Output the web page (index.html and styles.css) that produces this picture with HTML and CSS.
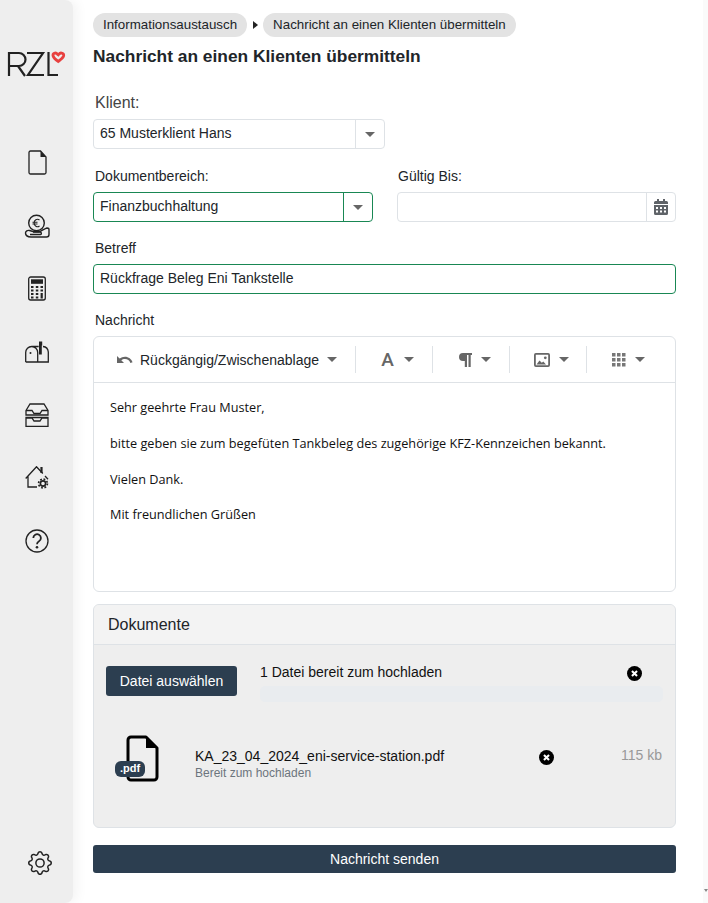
FILE: index.html
```html
<!DOCTYPE html>
<html lang="de">
<head>
    <meta charset="UTF-8">
    <title>Nachricht an einen Klienten übermitteln</title>
    <link rel="stylesheet" href="styles.css">
</head>
<body>
    <nav class="sidebar">
        <svg class="logo" width="60" height="30" viewBox="0 0 60 30" fill="none" stroke="#222" stroke-width="2.200">
            <path d="M2 27V4h10a6.500 6.500 0 0 1 0 13H2M11 17l7 10"/>
            <path d="M20 4h16L21 26h16"/>
            <path d="M41.500 3v23H51"/>
            <path d="M50.500 5.300c-1.800-2.500-5.300-1-4.300 2 .7 2 3 3.700 5 5.200 2-1.500 4.500-3.200 5.300-5.200 1-3-2.800-4.500-4.800-2l-1.200 1.700" stroke="#e8403f" stroke-width="2.800"/>
        </svg>
        <div class="nav-icons">
            <div class="nav-item">
                <svg width="20" height="25" viewBox="0 0 20 25" fill="none" stroke="#222" stroke-width="1.300"><path d="M3.500 1h10l5.500 6v15.500a1.500 1.500 0 0 1-1.500 1.500h-14A1.500 1.500 0 0 1 2 22.500v-20A1.500 1.500 0 0 1 3.500 1z"/><path d="M13.500 1l5.500 6h-5.500z" fill="#222" stroke="none"/></svg>
            </div>
            <div class="nav-item">
                <svg width="26" height="24" viewBox="0 0 26 24" fill="none" stroke="#222" stroke-width="1.400"><circle cx="12.500" cy="9" r="7.800"/><path d="M15.500 6a3.300 3.300 0 0 0-5.300 3 3.300 3.300 0 0 0 5.300 3M8.500 8.300h5M8.500 10h5" stroke-width="1.100"/><path d="M1.500 19c0-2 2-3 4-2.500l3.500 1c2.500.3 5 .3 7 0 2-.8 5-3 7-3.500 1.200 0 2 .5 2 1.500v5c0 1.500-1 2.500-2.500 2.500H7c-3 0-5.500-1.500-5.500-4z" fill="#eee"/><path d="M9 18h7c1.500 0 2 2 .5 2.500H6"/></svg>
            </div>
            <div class="nav-item">
                <svg width="20" height="25" viewBox="0 0 20 25" fill="none" stroke="#222" stroke-width="1.300"><rect x="1.700" y="1" width="16.600" height="23" rx="2"/><rect x="4" y="3.300" width="12" height="4.500" fill="#222" stroke="none"/><path d="M4 11h2.500M8.800 11h2.500M13.500 11h2.500M4 14.500h2.500M8.800 14.500h2.500M13.500 14.500h2.500M4 18h2.500M8.800 18h2.500M4 21.500h2.500M8.800 21.500h2.500M14.700 17v5.500" stroke-width="2.200"/></svg>
            </div>
            <div class="nav-item">
                <svg width="24" height="22" viewBox="0 0 24 22" fill="none" stroke="#222" stroke-width="1.300"><path d="M.7 21V11.500a6 6 0 0 1 6-6 6 6 0 0 1 6 6V21M.7 21h22.600V11a6 6 0 0 0-5.300-5.500M6.700 5.500h7"/><circle cx="5.500" cy="12" r="1" fill="#222" stroke="none"/><path d="M14 .5h3.200v4H16.800V13.500H14z" fill="#222" stroke="none"/></svg>
            </div>
            <div class="nav-item">
                <svg width="24" height="24" viewBox="0 0 24 24" fill="none" stroke="#222" stroke-width="1.300"><path d="M1 7.500L5 1h14l4 6.500v4.500H1z"/><path d="M1 7.500h6l2 3h6l2-3h6"/><path d="M1 14.500v9h22v-9zM1 15h6l2 3h6l2-3h6"/></svg>
            </div>
            <div class="nav-item">
                <svg width="24" height="23" viewBox="0 0 24 23" fill="none" stroke="#222" stroke-width="1.300"><path d="M.7 12.500L11.500.7l6.300 6.800M20 10l3 3.200M3 10.500V21h9"/><path d="M16.500 1v6" stroke-width="2.200"/><circle cx="18" cy="17.500" r="2.600" stroke-width="1.600"/><circle cx="18" cy="17.500" r="4.400" stroke-width="1.700" stroke-dasharray="1.800 1.655"/></svg>
            </div>
            <div class="nav-item">
                <svg width="24" height="24" viewBox="0 0 24 24" fill="none" stroke="#222" stroke-width="1.300"><circle cx="12" cy="12" r="11"/><path d="M8.300 9a3.800 3.800 0 1 1 5.700 3.300c-1.300.8-2 1.500-2 3" stroke-width="1.800"/><circle cx="12" cy="18.300" r="1.300" fill="#222" stroke="none"/></svg>
            </div>
        </div>
        <svg class="gear" width="24" height="24" viewBox="0 0 16 16" fill="#222"><path d="M8 4.754a3.246 3.246 0 1 0 0 6.492 3.246 3.246 0 0 0 0-6.492zM5.754 8a2.246 2.246 0 1 1 4.492 0 2.246 2.246 0 0 1-4.492 0z"/><path d="M9.796 1.343c-.527-1.790-3.065-1.790-3.592 0l-.094.319a.873.873 0 0 1-1.255.52l-.292-.16c-1.640-.892-3.433.902-2.540 2.541l.159.292a.873.873 0 0 1-.52 1.255l-.319.094c-1.790.527-1.790 3.065 0 3.592l.319.094a.873.873 0 0 1 .52 1.255l-.16.292c-.892 1.640.901 3.434 2.541 2.540l.292-.159a.873.873 0 0 1 1.255.52l.094.319c.527 1.790 3.065 1.790 3.592 0l.094-.319a.873.873 0 0 1 1.255-.52l.292.16c1.640.893 3.434-.902 2.540-2.541l-.159-.292a.873.873 0 0 1 .52-1.255l.319-.094c1.790-.527 1.790-3.065 0-3.592l-.319-.094a.873.873 0 0 1-.52-1.255l.16-.292c.893-1.640-.902-3.433-2.541-2.540l-.292.159a.873.873 0 0 1-1.255-.52l-.094-.319zm-2.633.283c.246-.835 1.428-.835 1.674 0l.094.319a1.873 1.873 0 0 0 2.693 1.115l.291-.16c.764-.415 1.600.42 1.184 1.185l-.159.292a1.873 1.873 0 0 0 1.116 2.692l.318.094c.835.246.835 1.428 0 1.674l-.319.094a1.873 1.873 0 0 0-1.115 2.693l.16.291c.415.764-.42 1.600-1.185 1.184l-.291-.159a1.873 1.873 0 0 0-2.693 1.116l-.094.318c-.246.835-1.428.835-1.674 0l-.094-.319a1.873 1.873 0 0 0-2.692-1.115l-.292.16c-.764.415-1.600-.42-1.184-1.185l.159-.291A1.873 1.873 0 0 0 1.945 8.930l-.319-.094c-.835-.246-.835-1.428 0-1.674l.319-.094A1.873 1.873 0 0 0 3.060 4.377l-.16-.292c-.415-.764.42-1.600 1.185-1.184l.292.159a1.873 1.873 0 0 0 2.692-1.115l.094-.319z"/></svg>
    </nav>

    <main class="content">
        <div class="breadcrumb">
            <span class="crumb">Informationsaustausch</span>
            <span class="crumb-arrow"></span>
            <span class="crumb">Nachricht an einen Klienten übermitteln</span>
        </div>
        <h1 class="title">Nachricht an einen Klienten übermitteln</h1>

        <label class="label label-big">Klient:</label>
        <div class="field field-client">
            <span class="field-value">65 Musterklient Hans</span>
            <span class="field-btn"><i class="caret"></i></span>
        </div>

        <div class="row">
            <div class="col-area">
                <label class="label">Dokumentbereich:</label>
                <div class="field valid">
                    <span class="field-value">Finanzbuchhaltung</span>
                    <span class="field-btn"><i class="caret"></i></span>
                </div>
            </div>
            <div class="col-date">
                <label class="label">Gültig Bis:</label>
                <div class="field">
                    <span class="field-value"></span>
                    <span class="field-btn">
                        <svg width="14" height="16" viewBox="0 0 14 16" fill="#5f6368"><path d="M3 0h2v2h4V0h2v2h1.500A1.500 1.500 0 0 1 14 3.500V5H0V3.500A1.500 1.500 0 0 1 1.500 2H3zM0 6h14v8.500a1.500 1.500 0 0 1-1.500 1.500h-11A1.500 1.500 0 0 1 0 14.500zm2 2v2h2V8zm4 0v2h2V8zm4 0v2h2V8zm-8 3.500v2h2v-2zm4 0v2h2v-2zm4 0v2h2v-2z"/></svg>
                    </span>
                </div>
            </div>
        </div>

        <label class="label label-gap">Betreff</label>
        <div class="field valid">
            <span class="field-value">Rückfrage Beleg Eni Tankstelle</span>
        </div>

        <label class="label label-gap">Nachricht</label>
        <div class="editor">
            <div class="toolbar">
                <div class="tool tool-first">
                    <svg width="16" height="10" viewBox="0 0 16 10" fill="#666"><path d="M0 1v7h7L4.300 5.300C5.300 4.500 6.500 4 8 4c2.500 0 4.600 1.600 5.400 4l2.200-.7C14.500 4 11.500 1.700 8 1.700c-2.100 0-4 .8-5.400 1.900z"/></svg>
                    <span class="tool-text">Rückgängig/Zwischenablage</span>
                    <i class="caret"></i>
                </div>
                <div class="tool">
                    <span class="tool-glyph glyph-a">A</span>
                    <i class="caret"></i>
                </div>
                <div class="tool">
                    <svg width="14" height="14" viewBox="0 0 14 14" fill="#666"><path d="M5 0h9v2h-1.300v12h-2.200V2H9v12H6.800V8H5A4 4 0 0 1 5 0z"/></svg>
                    <i class="caret"></i>
                </div>
                <div class="tool">
                    <svg width="16" height="14" viewBox="0 0 16 14" fill="none" stroke="#666" stroke-width="1.800"><rect x=".9" y=".9" width="14.200" height="12.200" rx="1"/><path d="M2.500 11.500l3-4 2.300 2.300 1.500-1.300 2.700 3z" fill="#666" stroke="none"/><circle cx="11.300" cy="4.800" r="1.400" fill="#666" stroke="none"/></svg>
                    <i class="caret"></i>
                </div>
                <div class="tool">
                    <svg width="14" height="14" viewBox="0 0 14 14" fill="#777"><path d="M0 0h3.500v3.500H0zM5 0h3.500v3.500H5zM10 0h3.500v3.500H10zM0 5h3.500v3.500H0zM5 5h3.500v3.500H5zM10 5h3.500v3.500H10zM0 10h3.500v3.500H0zM5 10h3.500v3.500H5zM10 10h3.500v3.500H10z"/></svg>
                    <i class="caret"></i>
                </div>
            </div>
            <div class="editor-body">
                <p>Sehr geehrte Frau Muster,</p>
                <p>bitte geben sie zum begefüten Tankbeleg des zugehörige KFZ-Kennzeichen bekannt.</p>
                <p>Vielen Dank.</p>
                <p>Mit freundlichen Grüßen</p>
            </div>
        </div>

        <section class="docs">
            <div class="docs-head">Dokumente</div>
            <div class="docs-body">
                <div class="upload">
                    <button class="btn btn-pick">Datei auswählen</button>
                    <div class="upload-status">
                        <div class="status-line">
                            <span>1 Datei bereit zum hochladen</span>
                            <svg class="remove" width="15" height="15" viewBox="0 0 16 16"><circle cx="8" cy="8" r="8"/><path d="M5.300 5.300l5.400 5.400M10.700 5.300l-5.400 5.400" stroke="#fff" stroke-width="2.200"/></svg>
                        </div>
                        <div class="progress"></div>
                    </div>
                </div>
                <div class="file">
                    <div class="file-icon">
                        <svg width="36" height="50" viewBox="0 0 36 50" fill="none" stroke="#000" stroke-width="3"><path d="M7 3h15l11 11v29a3 3 0 0 1-3 3H7a3 3 0 0 1-3-3V6a3 3 0 0 1 3-3z" stroke-linejoin="round"/><path d="M22 3v11h11z" fill="#000" stroke="none"/></svg>
                        <span class="pdf-tag">.pdf</span>
                    </div>
                    <div class="file-info">
                        <div class="file-name">KA_23_04_2024_eni-service-station.pdf</div>
                        <div class="file-state">Bereit zum hochladen</div>
                    </div>
                    <svg class="remove file-remove" width="15" height="15" viewBox="0 0 16 16"><circle cx="8" cy="8" r="8"/><path d="M5.300 5.300l5.400 5.400M10.700 5.300l-5.400 5.400" stroke="#fff" stroke-width="2.200"/></svg>
                    <div class="file-size">115 kb</div>
                </div>
            </div>
        </section>

        <button class="btn btn-send">Nachricht senden</button>
    </main>

    <div class="scrollbar"><i class="scroll-arrow"></i></div>
</body>
</html>
```

FILE: styles.css
```css
* {
    box-sizing: border-box;
}
html, body {
    height: 100%;
    overflow: hidden;
}
body {
    margin: 0;
    display: flex;
    font-family: "Liberation Sans", Arial, sans-serif;
    font-size: 14px;
    color: #212529;
    background: #fff;
}
.sidebar {
    width: 73px;
    height: 903px;
    flex: none;
    display: flex;
    flex-direction: column;
    align-items: center;
    background: #eee;
    border-radius: 0 8px 8px 0;
    box-shadow: 4px 0 12px rgba(0, 0, 0, .05);
}
.logo {
    margin-top: 49px;
    margin-left: 1px;
    flex: none;
}
.nav-icons {
    margin-top: 52px;
    display: flex;
    flex-direction: column;
    align-items: center;
}
.nav-item {
    height: 63px;
    display: flex;
    align-items: center;
}
.gear {
    margin-top: auto;
    margin-bottom: 28px;
    margin-left: 7px;
}
.content {
    width: 583px;
    margin-left: 20px;
    padding-top: 13px;
    flex: none;
}
.breadcrumb {
    display: flex;
    align-items: center;
    height: 24px;
}
.crumb {
    height: 24px;
    line-height: 24px;
    padding: 0 10px;
    background: #e3e3e3;
    border-radius: 12px;
    font-size: 13.330px;
}
.crumb-arrow {
    width: 0;
    height: 0;
    margin: 0 5px 0 6px;
    border-left: 5px solid #222;
    border-top: 4px solid transparent;
    border-bottom: 4px solid transparent;
}
.title {
    margin: 9px 0 0;
    font-size: 17.350px;
    line-height: 20px;
    font-weight: bold;
}
.label {
    display: block;
    margin: 0 0 8px 2px;
    line-height: 16px;
    font-size: 14px;
}
.label-big {
    margin-top: 29px;
    margin-bottom: 8px;
    font-size: 16px;
    color: #444;
}
.label-gap {
    margin-top: 18px;
}
.field {
    display: flex;
    height: 30px;
    border: 1px solid #dee2e6;
    border-radius: 4px;
    background: #fff;
}
.field-client {
    width: 292px;
}
.field.valid {
    border-color: #198754;
}
.field-value {
    flex: 1;
    padding-left: 6px;
    line-height: 27px;
    font-size: 14px;
}
.field-btn {
    width: 29px;
    display: flex;
    align-items: center;
    justify-content: center;
    border-left: 1px solid #dee2e6;
}
.valid .field-btn {
    border-left-color: #198754;
}
.caret {
    width: 0;
    height: 0;
    border-left: 5.500px solid transparent;
    border-right: 5.500px solid transparent;
    border-top: 5px solid #666;
}
.row {
    display: flex;
    gap: 24px;
    margin-top: 19px;
}
.col-area {
    width: 280px;
}
.col-date {
    flex: 1;
}
.col-date .label {
    margin-left: 1px;
}
.editor {
    height: 256px;
    border: 1px solid #dee2e6;
    border-radius: 6px;
}
.toolbar {
    display: flex;
    align-items: center;
    height: 46px;
    padding-left: 7px;
    border-bottom: 1px solid #dee2e6;
}
.tool {
    display: flex;
    align-items: center;
    justify-content: center;
    gap: 9px;
    width: 77px;
    height: 27px;
    padding-left: 6px;
    border-right: 1px solid #dee2e6;
}
.tool:last-child {
    border-right: 0;
}
.tool-first {
    width: 255px;
    gap: 8px;
    padding: 0 2px 0 0;
}
.tool-text {
    font-size: 14px;
    margin-left: -1px;
}
.tool-glyph {
    width: 14px;
    text-align: center;
    color: #666;
}
.glyph-a {
    font-family: Roboto, sans-serif;
    font-size: 19px;
    font-weight: 500;
}
.editor-body {
    padding: 16px 16px 0;
    font-family: "Open Sans", sans-serif;
    font-size: 12.700px;
    line-height: 17.900px;
    color: #111;
}
.editor-body p {
    margin: 0 0 17.900px;
}
.docs {
    margin-top: 12px;
    height: 224px;
    border: 1px solid #dee2e6;
    border-radius: 6px;
    background: #eee;
    overflow: hidden;
}
.docs-head {
    height: 40px;
    padding: 0 14px;
    line-height: 39px;
    font-size: 16px;
    background: #f3f3f3;
    border-bottom: 1px solid #dee2e6;
}
.docs-body {
    padding: 21px 12px 0;
}
.upload {
    display: flex;
    gap: 23px;
}
.btn {
    border: 0;
    border-radius: 3px;
    background: #2c3e50;
    color: #fff;
    font-family: inherit;
    font-size: 14px;
}
.btn-pick {
    width: 131px;
    height: 30px;
    flex: none;
}
.upload-status {
    flex: 1;
    margin-top: -1px;
}
.status-line {
    display: flex;
    justify-content: space-between;
    align-items: center;
    height: 14px;
    padding-right: 21px;
    color: #111;
}
.status-line .remove {
    margin-top: 3px;
}
.progress {
    height: 16px;
    margin-top: 7px;
    background: #e9ecef;
    border-radius: 5px;
}
.file {
    display: flex;
    align-items: flex-start;
    margin-top: 32px;
}
.file-icon {
    position: relative;
    width: 89px;
    flex: none;
    padding-left: 18px;
}
.pdf-tag {
    position: absolute;
    left: 9px;
    top: 27px;
    padding: 0 5px;
    height: 16px;
    line-height: 15px;
    border-radius: 6px;
    background: #2c3e50;
    color: #fff;
    font-size: 11px;
    font-weight: bold;
}
.file-info {
    width: 344px;
    padding-top: 14px;
}
.file-name {
    line-height: 16px;
    font-size: 14px;
    color: #111;
}
.file-state {
    margin-top: 2px;
    line-height: 14px;
    font-size: 12px;
    color: #6c757d;
}
.file-remove {
    margin-top: 16px;
    flex: none;
}
.file-size {
    flex: 1;
    text-align: right;
    padding-top: 13px;
    padding-right: 1px;
    color: #999;
    line-height: 16px;
}
.btn-send {
    display: block;
    width: 100%;
    height: 28px;
    margin-top: 17px;
}
.scrollbar {
    position: absolute;
    right: 0;
    top: 0;
    bottom: 0;
    width: 5px;
    background: #fafafa;
}
.scroll-arrow {
    position: absolute;
    left: 1px;
    bottom: 11px;
    border-left: 2px solid transparent;
    border-right: 2px solid transparent;
    border-top: 3px solid #888;
}
```
